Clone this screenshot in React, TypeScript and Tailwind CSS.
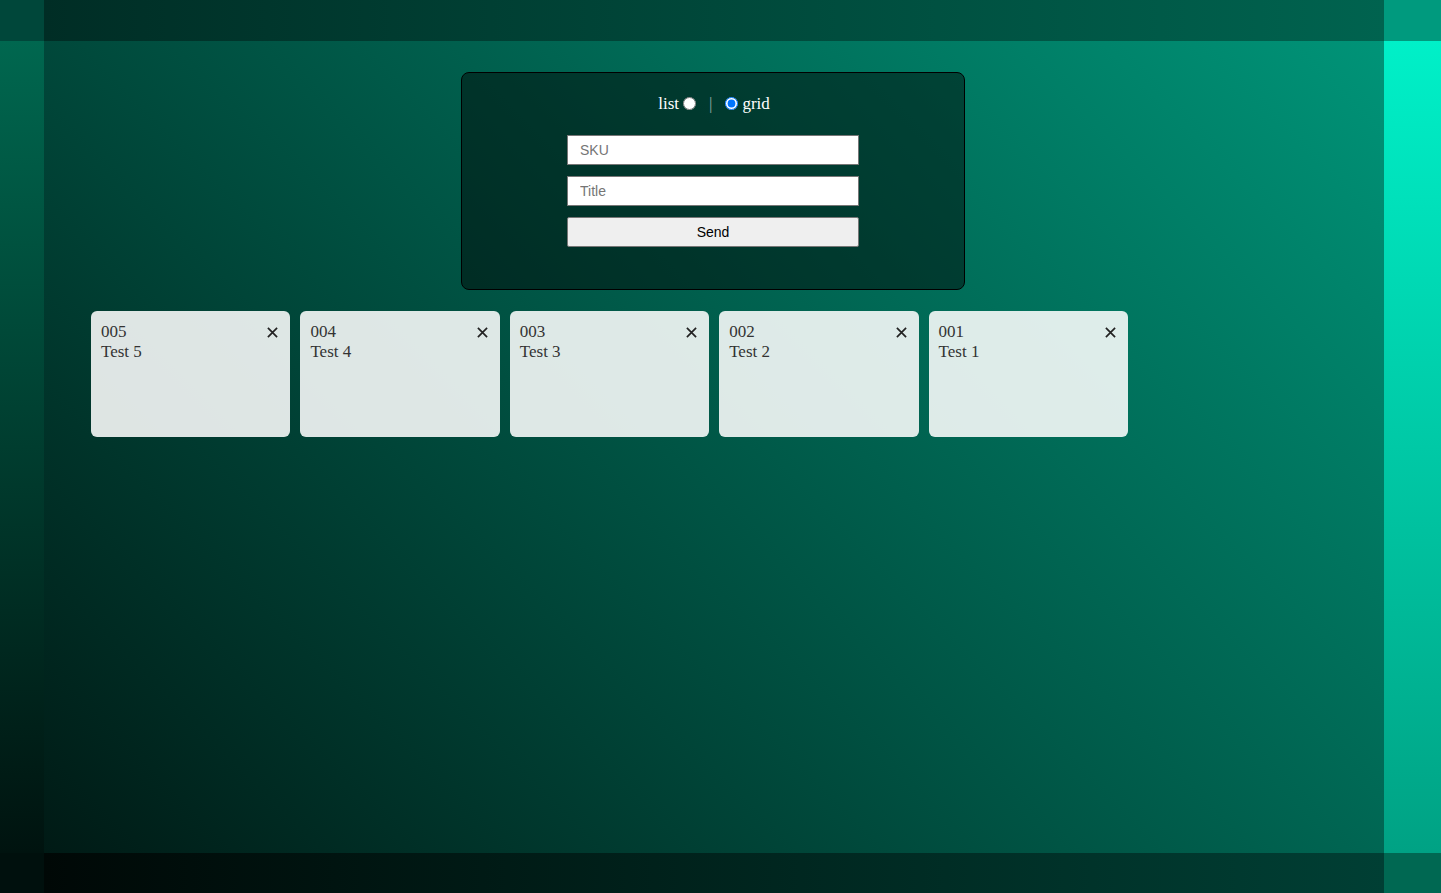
import React from "react";

const items = [
  { sku: "005", title: "Test 5" },
  { sku: "004", title: "Test 4" },
  { sku: "003", title: "Test 3" },
  { sku: "002", title: "Test 2" },
  { sku: "001", title: "Test 1" },
];

function CloseIcon() {
  return (
    <svg width="11" height="11" viewBox="0 0 11 11" className="block">
      <path d="M0.9 0.9 L10.1 10.1 M10.1 0.9 L0.9 10.1" stroke="#222" strokeWidth="1.7" strokeLinecap="butt" fill="none" />
    </svg>
  );
}

function Card({ sku, title }: { sku: string; title: string }) {
  return (
    <div className="w-[199.4px] h-[126px] shrink-0 rounded-[6px] bg-white/[0.87] pl-[10px] pr-[12px] pt-[11px] text-[17px] leading-[20px] text-[#333]">
      <div className="flex items-center justify-between h-[20px]">
        <span>{sku}</span>
        <span className="mt-[1px]">
          <CloseIcon />
        </span>
      </div>
      <div className="h-[20px]">{title}</div>
    </div>
  );
}

export default function App() {
  return (
    <div className="w-[1441px] h-[893px] overflow-hidden grid grid-cols-[44px_1340px_57px] grid-rows-[41px_812px_40px] font-['Liberation_Serif',serif]">
      {/* top row */}
      <div className="bg-[#00473a]" />
      <div className="bg-[linear-gradient(to_right,#002d25,#00634f)]" />
      <div className="bg-[#009a7e]" />

      {/* middle row */}
      <div className="bg-[linear-gradient(to_bottom,#00674f,#00130f)]" />
      <main className="bg-[linear-gradient(45deg,#001a15,#009478)] flex flex-col pt-[31px] pr-[2px]">
        <div className="mx-auto w-[504px] h-[218px] rounded-[8px] border border-black bg-black/[0.45] flex flex-col items-center pt-[21px]">
          <div className="flex items-center h-[20px] text-white text-[17px] leading-[20px] pl-[2px]">
            <span>list</span>
            <input type="radio" name="view" className="m-0 ml-[4px] -mt-[2px] w-[13px] h-[13px]" />
            <span className="ml-[13px] text-[#9aaaa6]">|</span>
            <input type="radio" name="view" defaultChecked className="m-0 ml-[13px] -mt-[2px] w-[13px] h-[13px]" />
            <span className="ml-[4px]">grid</span>
          </div>
          <div className="mt-[21px] flex flex-col gap-[11px] w-[292px]">
            <input
              type="text"
              placeholder="SKU"
              className="h-[30px] w-full bg-white border border-[#767676] pl-[12px] text-[14px] font-['Liberation_Sans',sans-serif] text-black placeholder:text-[#757575] outline-none"
            />
            <input
              type="text"
              placeholder="Title"
              className="h-[30px] w-full bg-white border border-[#767676] pl-[12px] text-[14px] font-['Liberation_Sans',sans-serif] text-black placeholder:text-[#757575] outline-none"
            />
            <button
              type="button"
              className="h-[30px] w-full bg-[#efefef] border border-[#767676] rounded-[2px] text-[14px] font-['Liberation_Sans',sans-serif] text-black"
            >
              Send
            </button>
          </div>
        </div>
        <div className="mt-[21px] pl-[47px] flex gap-[10px]">
          {items.map((it) => (
            <Card key={it.sku} sku={it.sku} title={it.title} />
          ))}
        </div>
      </main>
      <div className="bg-[linear-gradient(to_bottom,#00f0c8,#00a284)]" />

      {/* bottom row */}
      <div className="bg-[#00100d]" />
      <div className="bg-[linear-gradient(to_right,#000806,#003f34)]" />
      <div className="bg-[#006852]" />
    </div>
  );
}
